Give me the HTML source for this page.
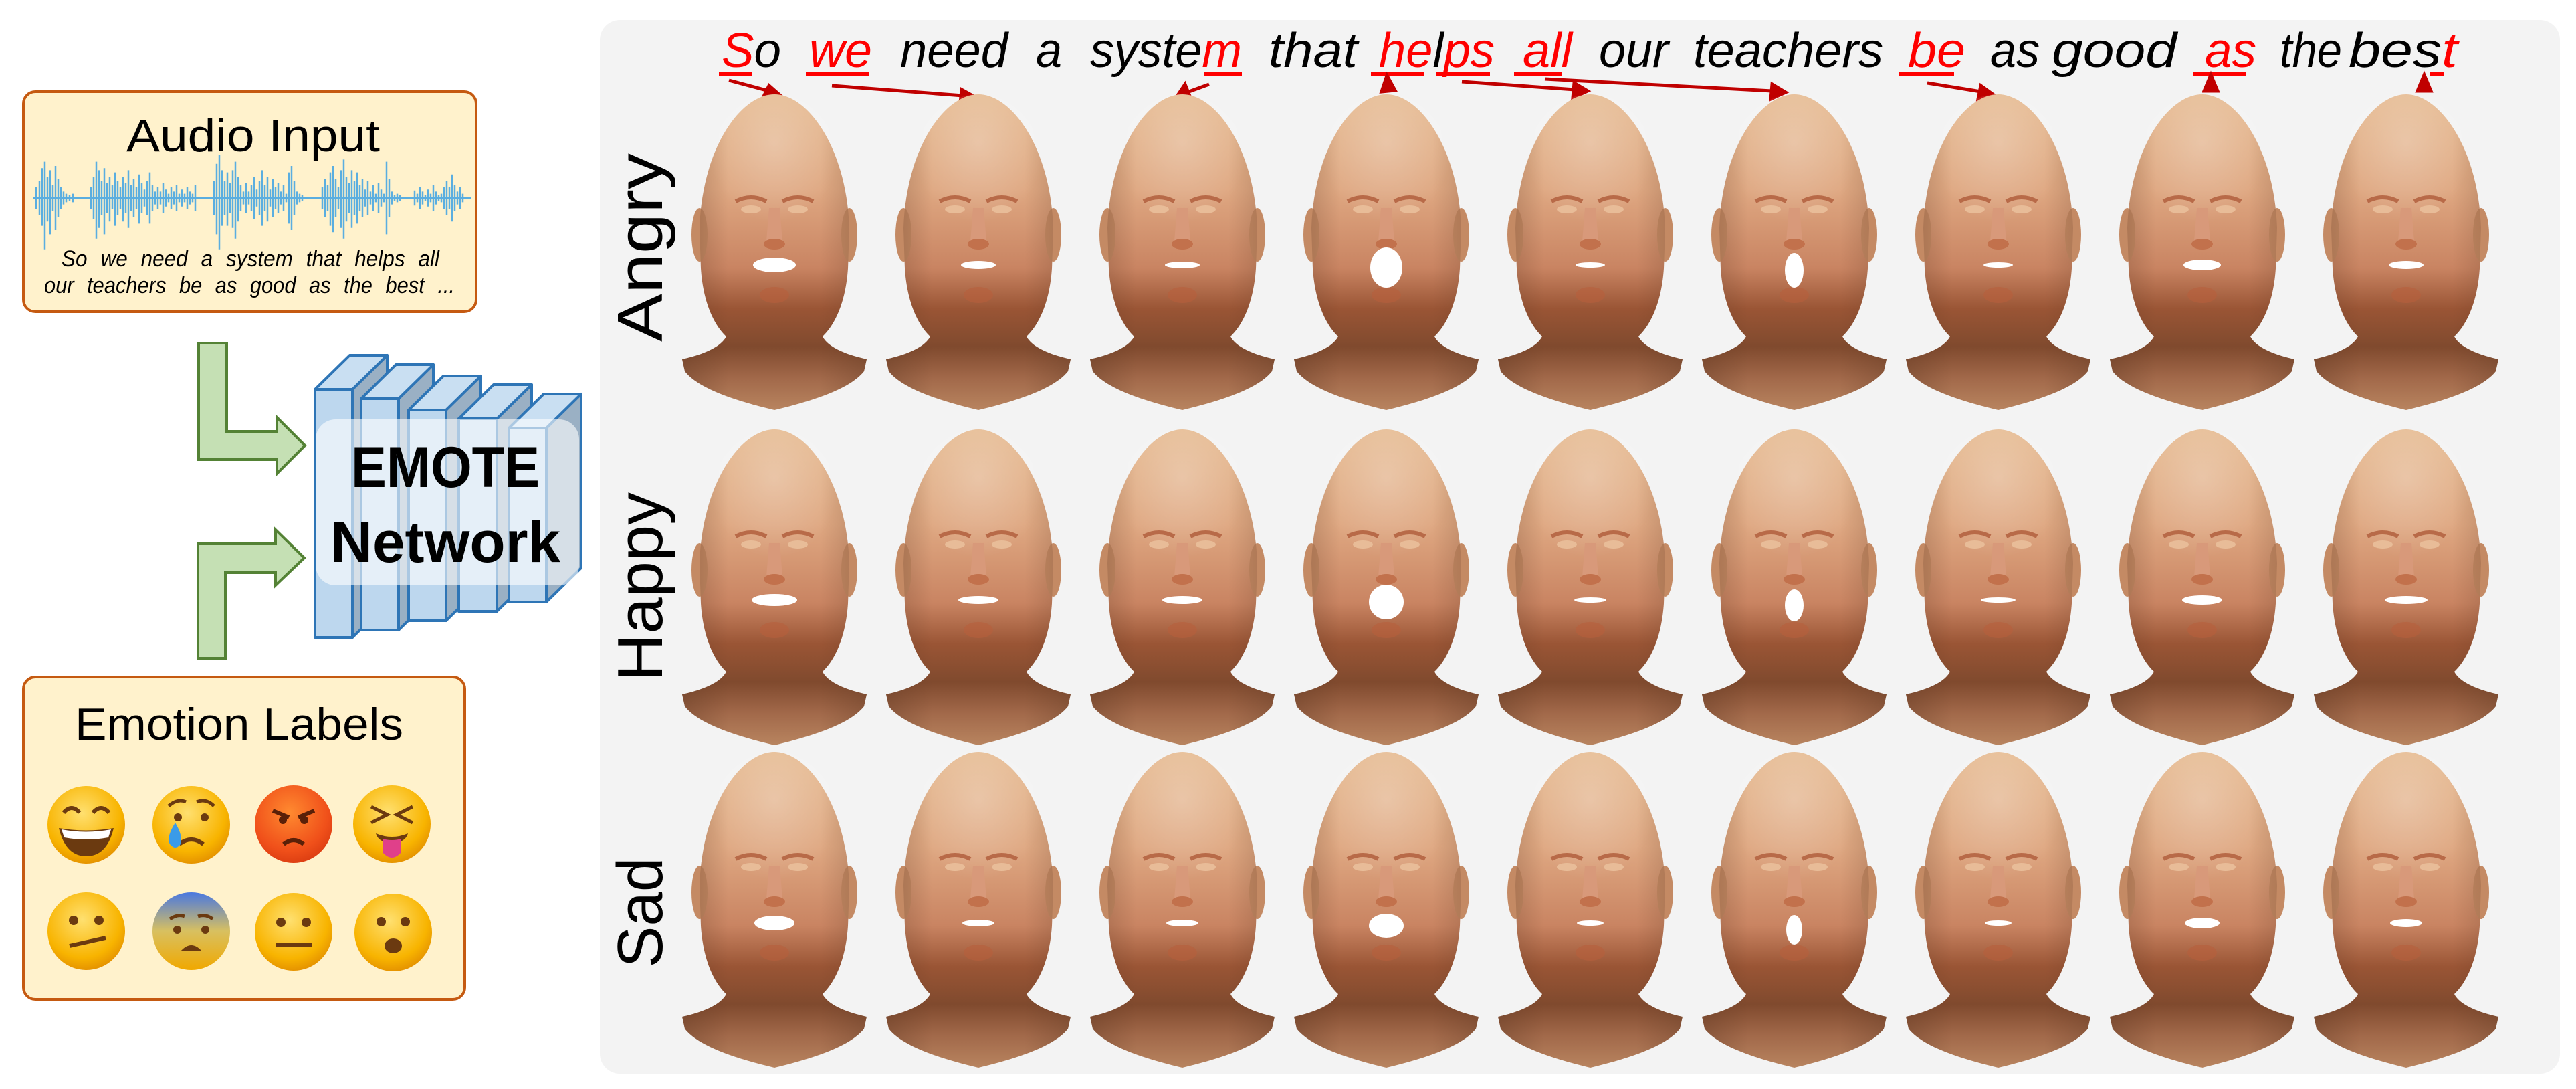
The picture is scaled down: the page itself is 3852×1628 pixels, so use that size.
<!DOCTYPE html>
<html><head><meta charset="utf-8"><style>
html,body{margin:0;padding:0;background:#fff;}
svg{display:block;}
</style></head><body>
<svg width="3852" height="1628" viewBox="0 0 3852 1628" xmlns="http://www.w3.org/2000/svg" font-family="Liberation Sans, sans-serif">
<defs>
<linearGradient id="skin" x1="0" y1="0" x2="0" y2="1">
<stop offset="0" stop-color="#e6bb92"/><stop offset="0.3" stop-color="#dfa882"/><stop offset="0.55" stop-color="#c98462"/><stop offset="0.68" stop-color="#9a5535"/><stop offset="0.8" stop-color="#804a2e"/><stop offset="0.9" stop-color="#a2694a"/><stop offset="1" stop-color="#b8845f"/>
</linearGradient>
<linearGradient id="side" x1="0" y1="0" x2="1" y2="0">
<stop offset="0" stop-color="#5a3520" stop-opacity="0.35"/><stop offset="0.25" stop-color="#5a3520" stop-opacity="0"/><stop offset="0.75" stop-color="#5a3520" stop-opacity="0"/><stop offset="1" stop-color="#5a3520" stop-opacity="0.3"/>
</linearGradient>
<radialGradient id="hl" cx="0.5" cy="0.3" r="0.5">
<stop offset="0" stop-color="#fff" stop-opacity="0.25"/><stop offset="1" stop-color="#fff" stop-opacity="0"/>
</radialGradient>
<radialGradient id="ey" cx="0.45" cy="0.35" r="0.7">
<stop offset="0" stop-color="#ffe070"/><stop offset="0.7" stop-color="#f8b400"/><stop offset="1" stop-color="#e08a00"/>
</radialGradient>
<radialGradient id="er" cx="0.45" cy="0.35" r="0.7">
<stop offset="0" stop-color="#ff8a30"/><stop offset="0.7" stop-color="#f0501a"/><stop offset="1" stop-color="#d83a10"/>
</radialGradient>
<linearGradient id="eb" x1="0" y1="0" x2="0" y2="1">
<stop offset="0" stop-color="#4a78e0"/><stop offset="0.5" stop-color="#d8c060"/><stop offset="1" stop-color="#f0a800"/>
</linearGradient>
<path id="hp" d="M150,0 C200,0 258,80 262,200 L260,260 C256,320 235,350 222,362 C232,382 270,392 288,396 L284,414 C262,442 200,460 150,472 C100,460 38,442 16,414 L12,396 C30,392 68,382 78,362 C65,350 44,320 40,260 L38,200 C42,80 100,0 150,0Z"/>
<g id="h">
<use href="#hp" fill="url(#skin)"/>
<ellipse cx="38" cy="210" rx="12" ry="40" fill="#c48a64"/>
<ellipse cx="262" cy="210" rx="12" ry="40" fill="#c48a64"/>
<use href="#hp" fill="url(#side)"/>
<ellipse cx="150" cy="120" rx="100" ry="120" fill="url(#hl)"/>
<path d="M92,160 Q115,148 138,160" stroke="#b86a48" stroke-width="6" fill="none"/>
<path d="M162,160 Q185,148 208,160" stroke="#b86a48" stroke-width="6" fill="none"/>
<ellipse cx="115" cy="172" rx="15" ry="6" fill="#e8bc98"/>
<ellipse cx="185" cy="172" rx="15" ry="6" fill="#e8bc98"/>
<path d="M142,170 L138,220 Q150,232 162,220 L158,170Z" fill="#d8997a"/>
<ellipse cx="150" cy="224" rx="16" ry="8" fill="#c2714c"/>
<ellipse cx="150" cy="300" rx="22" ry="12" fill="#b85f3c" opacity="0.6"/>
</g>
</defs>

<rect x="35" y="137" width="677" height="329" rx="18" fill="#fff2cc" stroke="#c55a11" stroke-width="4"/>
<text x="189" y="226" font-size="68" textLength="379" lengthAdjust="spacingAndGlyphs">Audio Input</text>
<g transform="translate(0,296) scale(1,1.6) translate(0,-296)">
<path fill="none" stroke="#5aaee0" stroke-width="2.5" vector-effect="non-scaling-stroke" d="M50,296 H704
M54,286V306 M59,280V312 M63,268V322 M67,262V344 M71,276V318 M75,270V330 M79,284V308 M83,266V326 M87,278V314 M91,286V306 M95,290V302 M99,292V300 M104,293V299 M109,292V300
M136,286V306 M140,276V316 M144,262V334 M148,270V324 M152,280V312 M156,268V330 M160,282V310 M164,276V318 M168,284V306 M172,272V322 M176,280V312 M180,286V306 M184,276V318 M188,282V310 M192,270V324 M196,284V308 M200,278V314 M204,286V306 M208,274V320 M212,282V310 M216,288V304 M220,280V312 M224,272V320 M228,284V308 M232,290V302 M236,286V306 M240,290V302 M244,282V310 M248,288V304 M252,292V300 M256,286V306 M260,290V302 M264,284V308 M268,292V300 M272,288V304 M276,292V300 M280,286V306 M284,290V302 M288,292V300 M292,284V308
M320,280V312 M324,264V330 M328,256V344 M332,270V322 M336,280V312 M340,272V322 M344,282V310 M348,270V324 M352,262V334 M356,276V318 M360,284V308 M364,290V302 M368,282V310 M372,290V302 M376,284V308 M380,276V316 M384,288V304 M388,280V312 M392,270V322 M396,284V308 M400,276V318 M404,288V304 M408,278V314 M412,286V306 M416,282V310 M420,290V302 M424,284V308 M428,292V300 M432,272V320 M436,266V326 M440,280V312 M444,290V302 M448,292V300 M452,293V299
M482,286V306 M486,278V314 M490,284V308 M494,272V322 M498,266V328 M502,278V314 M506,286V306 M510,270V324 M514,260V334 M518,276V318 M522,282V310 M526,270V324 M530,280V312 M534,272V320 M538,284V308 M542,278V314 M546,288V304 M550,280V312 M554,290V302 M558,284V308 M562,292V300 M566,282V310 M570,288V304 M574,292V300 M578,262V330 M582,278V314 M586,290V302 M590,293V299 M594,292V300 M598,293V299
M620,289V303 M624,292V300 M628,286V306 M632,290V302 M636,293V299 M640,288V304 M644,292V300 M648,284V308 M652,290V302 M656,293V299 M660,292V300 M664,286V306 M668,280V312 M672,286V306 M676,274V318 M680,284V308 M684,290V302 M688,286V306 M692,292V300"/>
</g>
<text x="92" y="398" font-size="34" font-style="italic" textLength="565" lengthAdjust="spacingAndGlyphs" word-spacing="12">So  we  need  a  system  that  helps  all</text>
<text x="66" y="438" font-size="34" font-style="italic" textLength="614" lengthAdjust="spacingAndGlyphs" word-spacing="12">our  teachers  be  as  good  as  the best ...</text>

<path d="M297,513 H339 V645 H414 V624 L456,666 L414,708 V687 H297Z" fill="#c5e0b4" stroke="#548235" stroke-width="4"/>
<path d="M296,984 H337 V856 H412 V875 L455,834 L412,792 V813 H296Z" fill="#c5e0b4" stroke="#548235" stroke-width="4"/>

<g stroke="#2e75b6" stroke-width="4" stroke-linejoin="round">
<g><path d="M527,582 L579,531 L579,902 L527,953Z" fill="#9ab0c4"/><path d="M471,582 L523,531 L579,531 L527,582Z" fill="#c9dff2"/><rect x="471" y="582" width="56" height="371" fill="#bdd7ee"/></g>
<g><path d="M596,596 L648,545 L648,891 L596,942Z" fill="#9ab0c4"/><path d="M540,596 L592,545 L648,545 L596,596Z" fill="#c9dff2"/><rect x="540" y="596" width="56" height="346" fill="#bdd7ee"/></g>
<g><path d="M667,613 L719,562 L719,877 L667,928Z" fill="#9ab0c4"/><path d="M611,613 L663,562 L719,562 L667,613Z" fill="#c9dff2"/><rect x="611" y="613" width="56" height="315" fill="#bdd7ee"/></g>
<g><path d="M743,626 L795,575 L795,863 L743,914Z" fill="#9ab0c4"/><path d="M686,626 L738,575 L795,575 L743,626Z" fill="#c9dff2"/><rect x="686" y="626" width="57" height="288" fill="#bdd7ee"/></g>
<g><path d="M817,640 L869,589 L869,849 L817,900Z" fill="#9ab0c4"/><path d="M761,640 L813,589 L869,589 L817,640Z" fill="#c9dff2"/><rect x="761" y="640" width="56" height="260" fill="#bdd7ee"/></g>
</g>
<rect x="472" y="627" width="394" height="248" rx="30" fill="#ffffff" fill-opacity="0.6"/>
<text x="666" y="728" font-size="86" font-weight="bold" text-anchor="middle" textLength="282" lengthAdjust="spacingAndGlyphs">EMOTE</text>
<text x="666" y="840" font-size="86" font-weight="bold" text-anchor="middle" textLength="344" lengthAdjust="spacingAndGlyphs">Network</text>

<rect x="35" y="1012" width="660" height="482" rx="18" fill="#fff2cc" stroke="#c55a11" stroke-width="4"/>
<text x="112" y="1106" font-size="68" textLength="491" lengthAdjust="spacingAndGlyphs">Emotion Labels</text>
<g>
<ellipse cx="129" cy="1233" rx="58" ry="58" fill="url(#ey)"/>
<path d="M95,1215 q12,-14 24,0 M139,1215 q12,-14 24,0" stroke="#6b3a10" stroke-width="6" fill="none"/>
<path d="M88,1238 Q129,1245 170,1238 Q160,1280 129,1280 Q98,1280 88,1238Z" fill="#6b3a10"/><path d="M92,1240 Q129,1247 166,1240 L162,1252 Q129,1258 96,1252Z" fill="#fff"/>
<ellipse cx="286" cy="1233" rx="58" ry="58" fill="url(#ey)"/>
<circle cx="266" cy="1222" r="6" fill="#6b3a10"/><circle cx="306" cy="1222" r="6" fill="#6b3a10"/>
<path d="M252,1205 q14,-12 26,-6 M294,1199 q14,-6 26,6" stroke="#6b3a10" stroke-width="5" fill="none"/>
<path d="M268,1262 q18,-14 36,0" stroke="#6b3a10" stroke-width="6" fill="none"/>
<path d="M262,1230 q-14,22 -8,32 q8,10 16,0 q4,-12 -8,-32Z" fill="#3a9be8"/>
<ellipse cx="439" cy="1232" rx="58" ry="58" fill="url(#er)"/>
<path d="M408,1212 l24,10 M470,1212 l-24,10" stroke="#5a2008" stroke-width="6"/>
<circle cx="423" cy="1226" r="6" fill="#5a2008"/><circle cx="455" cy="1226" r="6" fill="#5a2008"/>
<path d="M424,1262 q15,-12 30,0" stroke="#5a2008" stroke-width="6" fill="none"/>
<ellipse cx="586" cy="1232" rx="58" ry="58" fill="url(#ey)"/>
<path d="M555,1206 l24,12 l-24,12 M617,1206 l-24,12 l24,12" stroke="#6b3a10" stroke-width="5" fill="none"/>
<path d="M562,1246 q24,10 48,0 q-4,14 -24,14 q-20,0 -24,-14Z" fill="#6b3a10"/>
<path d="M572,1254 q14,4 28,0 v20 q-14,16 -28,0Z" fill="#e0408a"/>
<ellipse cx="129" cy="1392" rx="58" ry="58" fill="url(#ey)"/>
<circle cx="110" cy="1376" r="7" fill="#6b3a10"/><circle cx="148" cy="1376" r="7" fill="#6b3a10"/>
<path d="M104,1414 L158,1402" stroke="#6b3a10" stroke-width="6"/>
<ellipse cx="286" cy="1392" rx="58" ry="58" fill="url(#eb)"/>
<circle cx="265" cy="1390" r="6" fill="#6b3a10"/><circle cx="307" cy="1390" r="6" fill="#6b3a10"/>
<path d="M254,1374 q12,-8 22,-4 M296,1370 q12,-4 22,4" stroke="#6b3a10" stroke-width="5" fill="none"/>
<path d="M270,1422 q16,-18 32,0Z" fill="#6b3a10"/>
<ellipse cx="439" cy="1393" rx="58" ry="58" fill="url(#ey)"/>
<circle cx="420" cy="1379" r="7" fill="#6b3a10"/><circle cx="458" cy="1379" r="7" fill="#6b3a10"/>
<path d="M412,1413 H466" stroke="#6b3a10" stroke-width="6"/>
<ellipse cx="588" cy="1394" rx="58" ry="58" fill="url(#ey)"/>
<circle cx="570" cy="1378" r="7" fill="#6b3a10"/><circle cx="606" cy="1378" r="7" fill="#6b3a10"/>
<ellipse cx="588" cy="1414" rx="13" ry="11" fill="#6b3a10"/>
</g>

<rect x="897" y="30" width="2931" height="1575" rx="30" fill="#f3f3f3"/>

<g font-size="72" font-style="italic" fill="#000" font-family="Liberation Sans Narrow, Liberation Sans, sans-serif">
<text x="1079" y="100" textLength="89" lengthAdjust="spacingAndGlyphs"><tspan fill="#ff0000">S</tspan>o</text>
<text x="1210" y="100" textLength="94" lengthAdjust="spacingAndGlyphs" fill="#ff0000">we</text>
<text x="1346" y="100" textLength="161" lengthAdjust="spacingAndGlyphs">need</text>
<text x="1549" y="100" textLength="39" lengthAdjust="spacingAndGlyphs">a</text>
<text x="1630" y="100" textLength="227" lengthAdjust="spacingAndGlyphs">syste<tspan fill="#ff0000">m</tspan></text>
<text x="1897" y="100" textLength="133" lengthAdjust="spacingAndGlyphs">that</text>
<text x="2062" y="100" textLength="173" lengthAdjust="spacingAndGlyphs"><tspan fill="#ff0000">he</tspan>l<tspan fill="#ff0000">ps</tspan></text>
<text x="2277" y="100" textLength="74" lengthAdjust="spacingAndGlyphs" fill="#ff0000">all</text>
<text x="2391" y="100" textLength="104" lengthAdjust="spacingAndGlyphs">our</text>
<text x="2532" y="100" textLength="284" lengthAdjust="spacingAndGlyphs">teachers</text>
<text x="2853" y="100" textLength="86" lengthAdjust="spacingAndGlyphs" fill="#ff0000">be</text>
<text x="2976" y="100" textLength="74" lengthAdjust="spacingAndGlyphs">as</text>
<text x="3068" y="100" textLength="187" lengthAdjust="spacingAndGlyphs">good</text>
<text x="3297" y="100" textLength="77" lengthAdjust="spacingAndGlyphs" fill="#ff0000">as</text>
<text x="3409" y="100" textLength="93" lengthAdjust="spacingAndGlyphs">the</text>
<text x="3512" y="100" textLength="163" lengthAdjust="spacingAndGlyphs">bes<tspan fill="#ff0000">t</tspan></text>
</g>
<g fill="#ff0000">
<rect x="1075" y="108" width="49" height="6"/><rect x="1205" y="108" width="94" height="6"/><rect x="1800" y="108" width="57" height="6"/>
<rect x="2050" y="108" width="80" height="6"/><rect x="2148" y="108" width="80" height="6"/><rect x="2264" y="108" width="72" height="6"/>
<rect x="2840" y="108" width="82" height="6"/><rect x="3280" y="108" width="78" height="6"/><rect x="3633" y="108" width="22" height="6"/>
</g>
<g stroke="#c00000" stroke-width="5" fill="#c00000">
<line x1="1090" y1="120" x2="1150" y2="136"/><path d="M1166,142 L1140,148 L1150,128Z"/>
<line x1="1244" y1="128" x2="1440" y2="143"/><path d="M1458,145 L1436,154 L1438,134Z"/>
<line x1="1808" y1="126" x2="1775" y2="138"/><path d="M1760,144 L1772,126 L1780,146Z"/>
<line x1="2080" y1="137" x2="2078" y2="126"/><path d="M2074,113 L2066,137 L2086,135Z"/>
<line x1="2186" y1="122" x2="2355" y2="134"/><path d="M2374,136 L2352,146 L2354,124Z"/>
<line x1="2310" y1="118" x2="2650" y2="136"/><path d="M2670,138 L2648,148 L2650,126Z"/>
<line x1="2882" y1="124" x2="2962" y2="137"/><path d="M2980,141 L2958,148 L2962,128Z"/>
<line x1="3306" y1="136" x2="3306" y2="126"/><path d="M3306,112 L3296,136 L3316,136Z"/>
<line x1="3625" y1="136" x2="3625" y2="126"/><path d="M3625,112 L3615,136 L3635,136Z"/>
</g>

<g font-size="96" fill="#000" text-anchor="middle">
<text transform="translate(990,370) rotate(-90)" textLength="282" lengthAdjust="spacingAndGlyphs">Angry</text>
<text transform="translate(990,877) rotate(-90)" textLength="282" lengthAdjust="spacingAndGlyphs">Happy</text>
<text transform="translate(990,1364) rotate(-90)" textLength="165" lengthAdjust="spacingAndGlyphs">Sad</text>
</g>

<g>
<use href="#h" x="1008" y="141"/><use href="#h" x="1313" y="141"/><use href="#h" x="1618" y="141"/><use href="#h" x="1923" y="141"/><use href="#h" x="2228" y="141"/><use href="#h" x="2533" y="141"/><use href="#h" x="2838" y="141"/><use href="#h" x="3143" y="141"/><use href="#h" x="3448" y="141"/>
<use href="#h" x="1008" y="642"/><use href="#h" x="1313" y="642"/><use href="#h" x="1618" y="642"/><use href="#h" x="1923" y="642"/><use href="#h" x="2228" y="642"/><use href="#h" x="2533" y="642"/><use href="#h" x="2838" y="642"/><use href="#h" x="3143" y="642"/><use href="#h" x="3448" y="642"/>
<use href="#h" x="1008" y="1124"/><use href="#h" x="1313" y="1124"/><use href="#h" x="1618" y="1124"/><use href="#h" x="1923" y="1124"/><use href="#h" x="2228" y="1124"/><use href="#h" x="2533" y="1124"/><use href="#h" x="2838" y="1124"/><use href="#h" x="3143" y="1124"/><use href="#h" x="3448" y="1124"/>
</g>
<g fill="#ffffff">
<ellipse cx="1158" cy="396" rx="32" ry="11"/><ellipse cx="1463" cy="396" rx="26" ry="6"/><ellipse cx="1768" cy="396" rx="26" ry="5"/><ellipse cx="2073" cy="400" rx="24" ry="30"/><ellipse cx="2378" cy="396" rx="22" ry="4"/><ellipse cx="2683" cy="404" rx="14" ry="26"/><ellipse cx="2988" cy="396" rx="22" ry="4"/><ellipse cx="3293" cy="396" rx="28" ry="8"/><ellipse cx="3598" cy="396" rx="26" ry="6"/>
<ellipse cx="1158" cy="897" rx="34" ry="9"/><ellipse cx="1463" cy="897" rx="30" ry="6"/><ellipse cx="1768" cy="897" rx="30" ry="6"/><ellipse cx="2073" cy="900" rx="26" ry="26"/><ellipse cx="2378" cy="897" rx="24" ry="4"/><ellipse cx="2683" cy="905" rx="14" ry="24"/><ellipse cx="2988" cy="897" rx="26" ry="4"/><ellipse cx="3293" cy="897" rx="30" ry="7"/><ellipse cx="3598" cy="897" rx="32" ry="6"/>
<ellipse cx="1158" cy="1380" rx="30" ry="11"/><ellipse cx="1463" cy="1380" rx="24" ry="5"/><ellipse cx="1768" cy="1380" rx="24" ry="5"/><ellipse cx="2073" cy="1384" rx="26" ry="18"/><ellipse cx="2378" cy="1380" rx="20" ry="4"/><ellipse cx="2683" cy="1390" rx="12" ry="22"/><ellipse cx="2988" cy="1380" rx="20" ry="4"/><ellipse cx="3293" cy="1380" rx="26" ry="8"/><ellipse cx="3598" cy="1380" rx="24" ry="6"/>
</g>
</svg>
</body></html>
